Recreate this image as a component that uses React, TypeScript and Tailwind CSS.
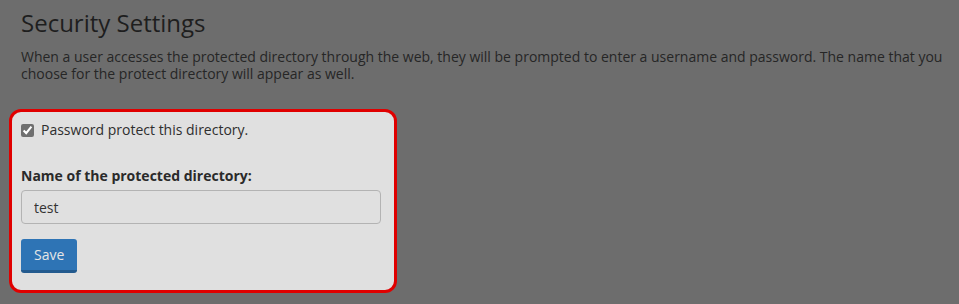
import React from 'react';

const App: React.FC = () => {
  return (
    <div
      className="w-[959px] h-[304px] bg-[#6d6d6d] overflow-hidden pl-[21px] pr-[14px] pt-[6px]"
      style={{ fontFamily: '"Open Sans", "Liberation Sans", sans-serif' }}
    >
      {/* Header */}
      <h1 className="text-[24px] leading-[34px] text-[#1e1e1e] font-normal">Security Settings</h1>
      <p className="mt-[8px] text-[14px] leading-[17px] text-[#262626]">
        When a user accesses the protected directory through the web, they will be prompted to enter a username and password. The name that you choose for the protect directory will appear as well.
      </p>

      {/* Highlighted form */}
      <div className="mt-[27px] -ml-[12px] w-[388px] h-[184px] rounded-[12px] border-[3px] border-[#e00000] bg-[#e0e0e0] px-[9px] pt-[8px]">
        <label className="flex items-center gap-[7px] text-[14px] leading-[20px] text-[#2e2e2e]">
          <input type="checkbox" defaultChecked className="w-[13px] h-[13px] m-0 accent-[#6f6f6f]" />
          Password protect this directory.
        </label>

        <div className="mt-[26px] text-[14px] leading-[20px] font-bold text-[#2a2a2a]">Name of the protected directory:</div>
        <input
          type="text"
          defaultValue="test"
          className="mt-[4px] block w-[360px] h-[34px] rounded-[4px] border border-[#b3b3b3] bg-[#e0e0e0] px-[12px] text-[14px] text-[#333333] outline-none"
        />

        <button className="mt-[15px] block h-[34px] px-[13px] rounded-[3px] bg-[#2e74b5] border-b-[3px] border-[#235a8e] text-[14px] leading-[20px] text-[#e6e6e6]">
          Save
        </button>
      </div>
    </div>
  );
};

export default App;
